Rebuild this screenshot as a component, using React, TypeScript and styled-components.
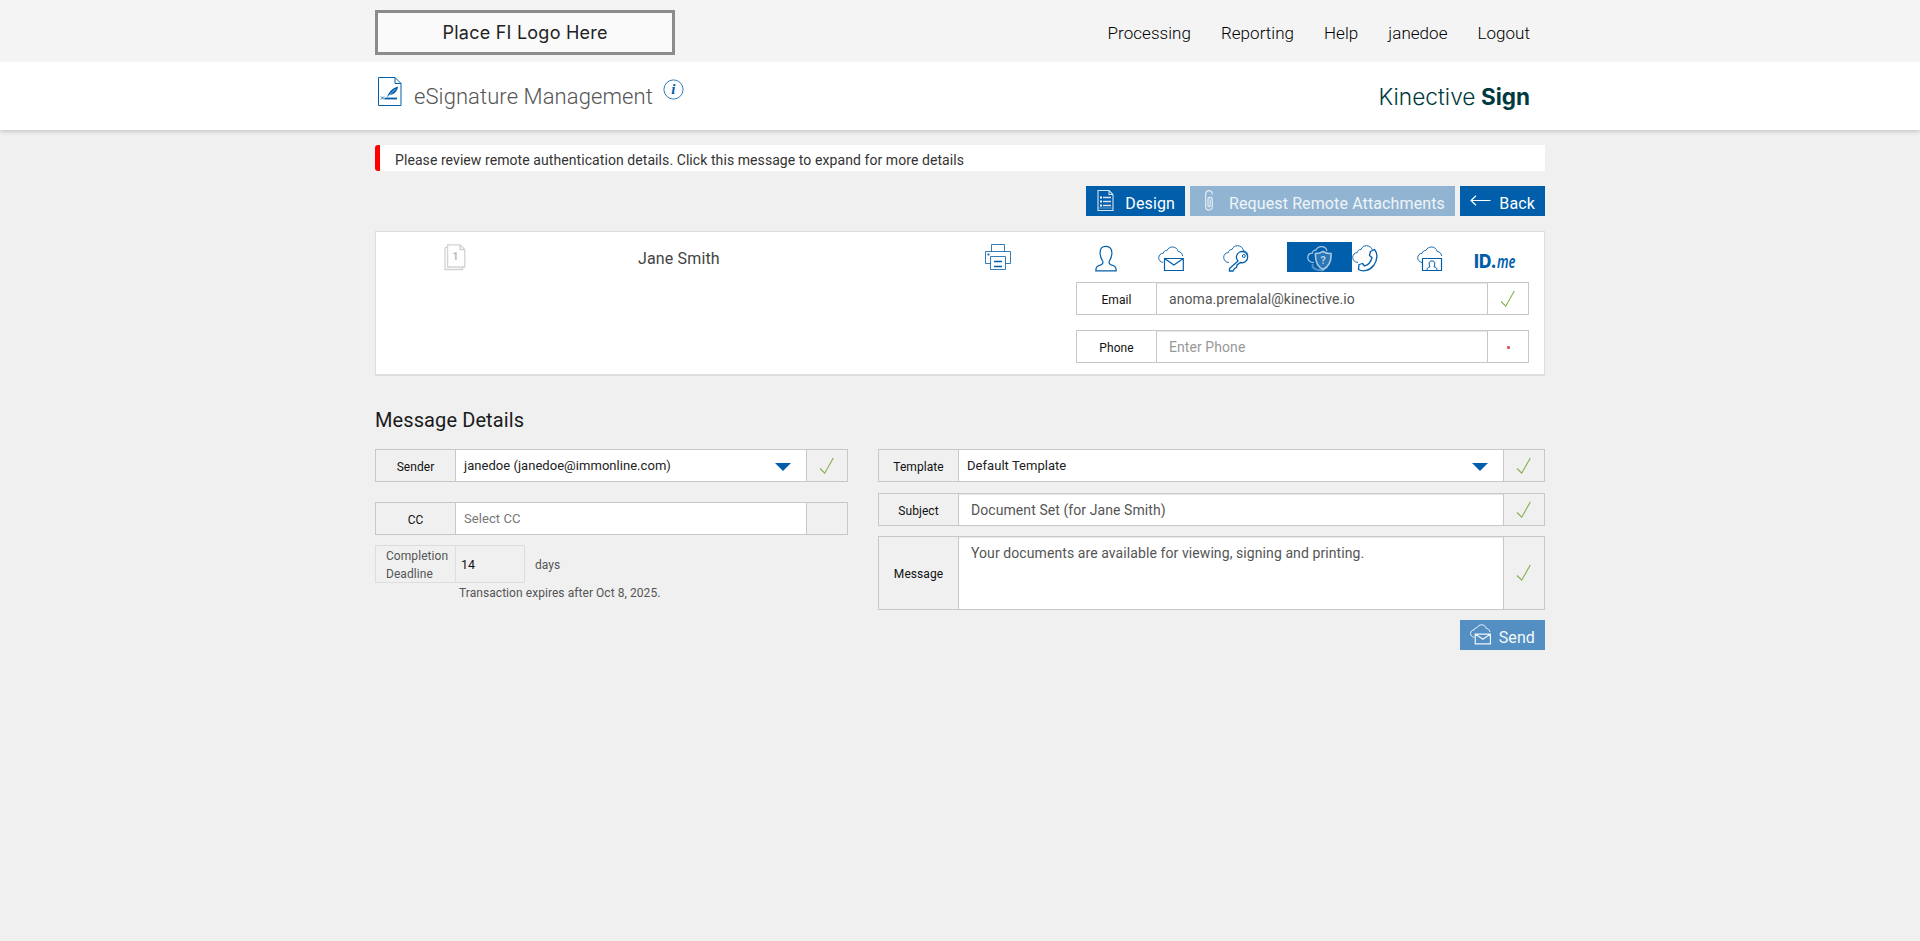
import React from "react";
import styled, { createGlobalStyle } from "styled-components";

const BLUE = "#005eaa";

const Global = createGlobalStyle`
  *, *::before, *::after { box-sizing: border-box; }
  body { margin: 0; background: #f0f0f0; font-family: Roboto, sans-serif; color: #222; min-height: 941px; }
  input, textarea, button { font-family: inherit; }
`;

const TopBar = styled.header`
  position: relative;
  z-index: 1;
  height: 62px;
  background: #f4f4f4;
`;

const SubHeader = styled.div`
  height: 68px;
  background: #fff;
  box-shadow: 0 1px 5px rgba(0, 0, 0, 0.22);
`;

const Container = styled.div`
  width: 1170px;
  height: 100%;
  margin: 0 auto;
  display: flex;
  justify-content: space-between;
`;

const LogoBox = styled.div`
  width: 300px;
  height: 45px;
  margin-top: 10px;
  border: 3px solid #8c8c8c;
  background: #fafafa;
`;

const Nav = styled.nav`
  display: flex;
  gap: 30px;
  padding: 23px 15px 0 0;
`;

const NavLink = styled.a`
  font-size: 17px;
  line-height: 20px;
  font-weight: 300;
  letter-spacing: 0.04px;
  color: #000;
`;

const PageTitle = styled.div`
  display: flex;
  align-items: flex-start;
  padding-left: 3px;
`;

const TitleText = styled.h1`
  margin: 22px 0 0 12px;
  font-size: 22px;
  line-height: 26px;
  font-weight: 300;
  letter-spacing: 0.09px;
  color: #555;
`;

const IconSlot = styled.span<{ $top?: number; $left?: number; $right?: number }>`
  display: block;
  flex: none;
  line-height: 0;
  margin: ${(p) => p.$top ?? 0}px ${(p) => p.$right ?? 0}px 0 ${(p) => p.$left ?? 0}px;
`;

const Main = styled.main`
  width: 1170px;
  margin: 0 auto;
  padding-top: 15px;
`;

const Alert = styled.div`
  height: 26px;
  padding: 6px 0 0 15px;
  border-left: 5px solid #f00;
  border-radius: 3px 0 0 3px;
  background: #fff;
  font-size: 14px;
  line-height: 18px;
  letter-spacing: 0.075px;
  color: #333;
`;

const Actions = styled.div<{ $top: number }>`
  display: flex;
  justify-content: flex-end;
  gap: 5px;
  margin-top: ${(p) => p.$top}px;
`;

const ActionButton = styled.button<{ $width: number; $bg?: string; $color?: string }>`
  width: ${(p) => p.$width}px;
  height: 30px;
  padding: 0 10px;
  border: 0;
  display: flex;
  justify-content: space-between;
  align-items: flex-start;
  background: ${(p) => p.$bg ?? BLUE};
  color: ${(p) => p.$color ?? "#fff"};
  font-size: 16px;
  line-height: 20px;
  letter-spacing: 0.12px;
`;

const ButtonText = styled.span`
  margin-top: 8px;
  white-space: nowrap;
`;

const Panel = styled.section`
  display: flex;
  height: 145px;
  margin-top: 15px;
  background: #fff;
  border: 1px solid #ddd;
  border-bottom-width: 2px;
`;

const DocCell = styled.div`
  width: 262px;
  padding: 12px 0 0 68px;
`;

const SignerName = styled.div`
  width: 347px;
  padding-top: 17px;
  font-size: 16px;
  line-height: 20px;
  letter-spacing: 0.15px;
  color: #444;
`;

const PrintCell = styled.div`
  width: 91px;
  padding-top: 12px;
`;

const AuthArea = styled.div`
  flex: 1;
  padding: 10px 15px 0 0;
`;

const MethodRow = styled.div`
  display: flex;
  height: 30px;
`;

const Method = styled.button<{ $width: number; $pad: number; $active?: boolean; $gap?: number }>`
  width: ${(p) => p.$width}px;
  height: 30px;
  margin: 0 0 0 ${(p) => p.$gap ?? 0}px;
  padding: 3px 0 0 ${(p) => p.$pad}px;
  border: 0;
  text-align: left;
  line-height: 0;
  background: ${(p) => (p.$active ? BLUE : "transparent")};
`;

const Field = styled.div<{ $top?: number; $height?: number }>`
  display: flex;
  height: ${(p) => p.$height ?? 33}px;
  margin-top: ${(p) => p.$top ?? 0}px;
  border: 1px solid #c8c8c8;
`;

const FieldLabel = styled.label<{ $drop?: number }>`
  width: 80px;
  flex: none;
  display: flex;
  align-items: center;
  justify-content: center;
  padding-top: ${(p) => p.$drop ?? 3}px;
  border-right: 1px solid #c8c8c8;
  font-size: 12px;
  line-height: 14px;
  letter-spacing: 0.06px;
  color: #111;
`;

const TextInput = styled.input<{ $hint?: string }>`
  flex: 1;
  min-width: 0;
  padding: 0 12px;
  border: 0;
  outline: 0;
  background: #fff;
  box-shadow: inset 0 1px 1px rgba(0, 0, 0, 0.1);
  font-size: 14px;
  letter-spacing: 0.075px;
  color: #555;
  &::placeholder { color: ${(p) => p.$hint ?? "#999"}; opacity: 1; }
`;

const CcInput = styled(TextInput)`
  padding: 0 8px;
  font-size: 13px;
  box-shadow: none;
`;

const TextArea = styled.textarea`
  flex: 1;
  min-width: 0;
  padding: 6px 12px;
  border: 0;
  outline: 0;
  resize: none;
  background: #fff;
  box-shadow: inset 0 1px 1px rgba(0, 0, 0, 0.1);
  font-size: 14px;
  line-height: 20px;
  letter-spacing: 0.085px;
  color: #555;
`;

const SelectBox = styled.div`
  flex: 1;
  display: flex;
  align-items: center;
  justify-content: space-between;
  padding: 0 15px 0 8px;
  background: #fff;
  font-size: 13px;
  letter-spacing: 0.04px;
  color: #222;
`;

const Caret = styled.span`
  border: 8px solid transparent;
  border-top-color: ${BLUE};
  border-bottom: 0;
  margin-top: 3px;
`;

const Status = styled.div`
  width: 41px;
  flex: none;
  display: flex;
  align-items: center;
  justify-content: center;
  border-left: 1px solid #c8c8c8;
`;

const Dot = styled.span`
  width: 3px;
  height: 3px;
  margin-top: 1px;
  border-radius: 1px;
  background: #dc5560;
`;

const SectionTitle = styled.h2`
  margin: 32px 0 0;
  font-size: 20px;
  line-height: 24px;
  font-weight: 400;
  letter-spacing: 0.1px;
  color: #1a1a1a;
`;

const Columns = styled.div`
  display: flex;
  gap: 30px;
  margin-top: 17px;
`;

const LeftColumn = styled.div`
  width: 473px;
`;

const RightColumn = styled.div`
  flex: 1;
`;

const DeadlineRow = styled.div`
  display: flex;
  height: 38px;
  margin-top: 10px;
  font-size: 12px;
  letter-spacing: 0.06px;
  color: #555;
`;

const DeadlineBox = styled.div`
  display: flex;
  width: 150px;
  height: 38px;
  margin-right: 10px;
  border: 1px solid #ddd;
`;

const DeadlineLabel = styled.div`
  width: 80px;
  padding: 1px 0 0 10px;
  border-right: 1px solid #ddd;
  line-height: 18px;
`;

const DeadlineValue = styled.div`
  padding: 1px 0 0 5px;
  align-self: center;
  font-size: 12.5px;
  color: #111;
`;

const DeadlineUnit = styled.span`
  padding-top: 2px;
  align-self: center;
`;

const Expires = styled.div`
  margin: 2px 0 0 84px;
  font-size: 12px;
  line-height: 16px;
  letter-spacing: 0.06px;
  color: #555;
`;

const LogoSvg = styled.svg`
  display: block;
  overflow: visible;
`;

const CLOUD = "M6 17.5C2.8 17.5.7 15 .7 12.300.7 9.700 2.700 7.600 5.300 7.600 5.600 5.500 7.200 4.300 9 4.500 10 2 11.900.7 14.400.7 17.700.7 20.200 3 20.600 5.900 23.300 6.200 24.600 7.800 24.900 10";

const Check = () => (
  <svg width="16" height="18" viewBox="0 0 16 18" fill="none">
    <path d="M1 11.500 5.700 16.200 14.300 1" stroke="#83b04c" strokeWidth="1.100" />
  </svg>
);

const EsignIcon = () => (
  <svg width="24" height="30" viewBox="0 0 24 30" fill="none" stroke={BLUE}>
    <path d="M.5.5H17L23 6.500V28.500H.5ZM17 .5V6.500H23" />
    <path d="M6.500 21.500H19" strokeWidth="1.800" />
    <path d="M3 19.500 6 22.500M6 19.500 3 22.500" strokeWidth=".9" />
    <path d="M9 20.500C10.500 15 14.500 11 20 9.500 19.500 14 16 18 11.500 18Z" fill={BLUE} stroke="none" />
    <path d="M10 19.500 17.500 12" stroke="#fff" strokeWidth=".6" />
  </svg>
);

const InfoIcon = () => (
  <svg width="21" height="21" viewBox="0 0 21 21">
    <circle cx="10.500" cy="10.500" r="9.600" fill="none" stroke={BLUE} strokeWidth=".8" />
    <text x="10.300" y="15.300" textAnchor="middle" fontFamily="Liberation Serif, serif" fontStyle="italic" fontWeight="700" fontSize="15" fill={BLUE}>i</text>
  </svg>
);

const Brand = () => (
  <LogoSvg width="152" height="30" viewBox="0 0 152 30" fill="#003a40">
    <text x="-.5" y="22" fontFamily="Inter, sans-serif" fontSize="22.500" fontWeight="300" textLength="97" lengthAdjust="spacingAndGlyphs">Kinective</text>
    <text x="102" y="22" fontFamily="Inter, sans-serif" fontSize="22.500" fontWeight="700" textLength="49" lengthAdjust="spacingAndGlyphs">Sign</text>
  </LogoSvg>
);

const FormIcon = () => (
  <svg width="18" height="21" viewBox="0 0 18 21" fill="none" stroke="#d5e4f1">
    <path d="M1 .5H12L16 4.500V20.500H1ZM12 .5V4.500H16" strokeWidth="1.100" />
    <path d="M3 7.500H5M3 11.500H5M3 15.500H5" strokeWidth="2" stroke="#fff" />
    <path d="M6 7.500H14M6 11.500H14M6 15.500H14" strokeWidth="1.300" />
    <path d="M1 18H16" strokeWidth=".8" opacity=".6" />
  </svg>
);

const ClipIcon = () => (
  <svg width="8" height="21" viewBox="0 0 8 21" fill="none" stroke="#e8f0f7" strokeWidth="1.150">
    <path d="M7.300 4.500V4C7.300-.5.700-.5.700 4V16.500C.7 21.300 7.300 21.300 7.300 16.500V10C7.300 6.400 3 6.400 3 10V15.500C3 17.200 5.200 17.200 5.200 15.500V9.500" />
  </svg>
);

const ArrowIcon = () => (
  <svg width="21" height="11" viewBox="0 0 21 11" fill="none" stroke="#fff" strokeWidth="1.200">
    <path d="M1 5.500H20.500M6 .8 1 5.500 6 10.200" />
  </svg>
);

const DocsIcon = () => (
  <svg width="22" height="27" viewBox="0 0 22 27" fill="none" stroke="#d2d2d2">
    <path d="M1 3.500V25.500H18.500V23.500M1 3.500H3.500" strokeWidth="1.300" />
    <path d="M3.600.8H16L20.800 5.500V23H3.600ZM16 .8V5.500H20.800" strokeWidth="1.300" />
    <text x="11.500" y="16" textAnchor="middle" fontFamily="Roboto, sans-serif" fontWeight="700" fontSize="11" fill="#bbb" stroke="none">1</text>
  </svg>
);

const PrinterIcon = () => (
  <svg width="26" height="27" viewBox="0 0 26 27" fill="none" stroke={BLUE} strokeWidth=".8">
    <path d="M6.500 7.500V.5H19.500V7.500M5.500 19.500H.5V7.500H25.500V19.500H20.500" />
    <path d="M5.500 12.500H20.500V25.500H5.500Z" />
    <path d="M9 17.500H17M9 22.500H17" strokeWidth="1.300" />
    <path d="M2.500 10.500H4.500" strokeWidth="1.700" />
  </svg>
);

const PersonIcon = () => (
  <svg width="22" height="27" viewBox="0 0 22 27" fill="none" stroke={BLUE} strokeWidth="1.200">
    <path d="M7.800 16.500C6.600 14.500 5.100 12 5.100 8.200 5.100 3.400 6.800 1.300 11 1.300S16.900 3.400 16.900 8.200C16.900 12 15.400 14.500 14.200 16.500 13.600 18.300 14.400 19.300 16.200 19.900 19.500 20.900 21.200 21.500 21.200 25.800H.8C.8 21.500 2.500 20.900 5.800 19.900 7.600 19.300 8.400 18.300 7.800 16.500Z" />
  </svg>
);

const CloudMailIcon = ({ color = BLUE, size = 26 }: { color?: string; size?: number }) => (
  <svg width={size} height={size} viewBox="0 0 26 26" fill="none" stroke={color}>
    <path d="M5 16.500C2.500 16 .7 14.200.7 11.800.7 9.200 2.700 7.300 5.200 7.300 5.600 5.300 7 4.500 8.800 4.600 10 2.200 12 1 14.500 1 17.500 1 19.600 2.900 20.100 5.500 22.700 5.700 24.400 7.500 24.700 10" strokeWidth={size < 26 ? 1.2 : 0.9} />
    <path d="M6.500 12.500H25.300V24.500H6.500ZM6.500 12.500 15.900 19 25.300 12.500" strokeWidth={size < 26 ? 1.5 : 1.2} />
  </svg>
);

const CloudKeyIcon = () => (
  <svg width="27" height="27" viewBox="0 0 27 27" fill="none" stroke={BLUE}>
    <path d={CLOUD} strokeWidth=".9" />
    <path d="M15 16 6.500 23.500V26H10L11.500 23.500 13.500 22.500 14 20 17.500 17.500A5.600 5.600 0 1 0 15 16Z" strokeWidth="1.300" fill="#fff" />
    <circle cx="20.800" cy="11" r="1.500" strokeWidth="1" />
  </svg>
);

const CloudShieldIcon = () => (
  <svg width="26" height="26" viewBox="0 0 26 26" fill="none" stroke="#a9c8e2">
    <path d="M7 16.500C3 16.500.8 14.500.8 11.600.8 9 2.700 7.200 5.300 7.200 5.500 5.200 7 4 8.900 4.200 10 1.900 12 .7 14.300.7 17.500.7 19.500 2.500 20 5" strokeWidth="1.200" />
    <path d="M6 18C3.500 22 10 25 17 24" opacity=".5" strokeWidth="2" />
    <path d="M8.500 7.500C11.500 7.800 13.500 7 16 5.500 18.500 7 20.800 7.800 24 7.500 24.500 15 22 20.500 16.200 23.500 10.300 20.500 8 15 8.500 7.500Z" strokeWidth="1.600" fill="#2b76b7" />
    <text x="16.200" y="18" textAnchor="middle" fontFamily="Roboto, sans-serif" fontWeight="700" fontSize="10.500" fill="#b5cfe6" stroke="none">?</text>
  </svg>
);

const CloudPhoneIcon = () => (
  <svg width="27" height="27" viewBox="0 0 27 27" fill="none" stroke={BLUE}>
    <path d={CLOUD} strokeWidth=".9" />
    <path d="M18.500 6.500 22.500 4.500C26 8.500 25.500 15 22 20 17.500 26 11 27 6.500 24.500L7 19.500 10.500 18.500 12.500 21C16 20 19 16.500 20 12.500L17.500 10.500Z" strokeWidth="1.300" fill="#fff" strokeLinejoin="round" />
  </svg>
);

const CloudIdIcon = () => (
  <svg width="27" height="26" viewBox="0 0 27 26" fill="none" stroke={BLUE}>
    <path d="M5 16.500C2.500 16 .7 14.200.7 11.800.7 9.200 2.700 7.300 5.200 7.300 5.600 5.300 7 4.500 8.800 4.600 10 2.200 12 1 14.500 1 17.500 1 19.600 2.900 20.100 5.500 22.700 5.700 24.400 7.500 24.700 10" strokeWidth=".9" />
    <path d="M5.500 12.500H24.500V24.500H5.500Z" strokeWidth="1.200" />
    <path d="M10 24C10 21.500 11.500 21.200 13 20.800 12.300 19.500 12 18.500 12.100 17 12.300 14.200 17.600 14.200 17.800 17 17.900 18.500 17.600 19.500 16.900 20.800 18.600 21.200 20 21.500 20 24" />
  </svg>
);

const IdMeLogo = () => (
  <LogoSvg width="42" height="20" viewBox="0 0 42 20" fill={BLUE}>
    <text x="-1" y="15" fontFamily="Inter, sans-serif" fontWeight="800" fontSize="19" textLength="22.500" lengthAdjust="spacingAndGlyphs">ID.</text>
    <text x="22" y="15" fontFamily="Noto Sans, sans-serif" fontStyle="italic" fontWeight="600" fontSize="17" textLength="18.500" lengthAdjust="spacingAndGlyphs">me</text>
  </LogoSvg>
);

const FiLogo = () => (
  <LogoSvg width="294" height="39" viewBox="0 0 294 39">
    <text x="64.500" y="25.500" fontFamily="Inter, sans-serif" fontSize="18" fill="#222" textLength="165">Place FI Logo Here</text>
  </LogoSvg>
);

const LINKS = ["Processing", "Reporting", "Help", "janedoe", "Logout"];

export default function App() {
  return (
    <>
      <Global />
      <TopBar>
        <Container>
          <LogoBox><FiLogo /></LogoBox>
          <Nav>{LINKS.map((l) => <NavLink key={l}>{l}</NavLink>)}</Nav>
        </Container>
      </TopBar>
      <SubHeader>
        <Container>
          <PageTitle>
            <IconSlot $top={15}><EsignIcon /></IconSlot>
            <TitleText>eSignature Management</TitleText>
            <IconSlot $top={17} $left={10}><InfoIcon /></IconSlot>
          </PageTitle>
          <IconSlot $top={21} $right={14}><Brand /></IconSlot>
        </Container>
      </SubHeader>
      <Main>
        <Alert>Please review remote authentication details. Click this message to expand for more details</Alert>
        <Actions $top={15}>
          <ActionButton $width={99}>
            <IconSlot $top={4} $left={1}><FormIcon /></IconSlot>
            <ButtonText>Design</ButtonText>
          </ActionButton>
          <ActionButton $width={265} $bg="#91b4d2" $color="#eff4f8">
            <IconSlot $top={4} $left={5}><ClipIcon /></IconSlot>
            <ButtonText>Request Remote Attachments</ButtonText>
          </ActionButton>
          <ActionButton $width={85}>
            <IconSlot $top={9}><ArrowIcon /></IconSlot>
            <ButtonText>Back</ButtonText>
          </ActionButton>
        </Actions>
        <Panel>
          <DocCell><DocsIcon /></DocCell>
          <SignerName>Jane Smith</SignerName>
          <PrintCell><PrinterIcon /></PrintCell>
          <AuthArea>
            <MethodRow>
              <Method $width={63} $pad={19}><PersonIcon /></Method>
              <Method $width={65} $pad={19}><CloudMailIcon /></Method>
              <Method $width={65} $pad={19}><CloudKeyIcon /></Method>
              <Method $width={65} $pad={20} $gap={18} $active><CloudShieldIcon /></Method>
              <Method $width={65} $pad={0}><CloudPhoneIcon /></Method>
              <Method $width={58} $pad={0}><CloudIdIcon /></Method>
              <Method $width={42} $pad={0}><IconSlot $top={8}><IdMeLogo /></IconSlot></Method>
            </MethodRow>
            <Field $top={10}>
              <FieldLabel>Email</FieldLabel>
              <TextInput defaultValue="anoma.premalal@kinective.io" />
              <Status><Check /></Status>
            </Field>
            <Field $top={15}>
              <FieldLabel>Phone</FieldLabel>
              <TextInput placeholder="Enter Phone" />
              <Status><Dot /></Status>
            </Field>
          </AuthArea>
        </Panel>
        <SectionTitle>Message Details</SectionTitle>
        <Columns>
          <LeftColumn>
            <Field>
              <FieldLabel>Sender</FieldLabel>
              <SelectBox>janedoe (janedoe@immonline.com)<Caret /></SelectBox>
              <Status><Check /></Status>
            </Field>
            <Field $top={20}>
              <FieldLabel>CC</FieldLabel>
              <CcInput placeholder="Select CC" $hint="#777" />
              <Status />
            </Field>
            <DeadlineRow>
              <DeadlineBox>
                <DeadlineLabel>Completion Deadline</DeadlineLabel>
                <DeadlineValue>14</DeadlineValue>
              </DeadlineBox>
              <DeadlineUnit>days</DeadlineUnit>
            </DeadlineRow>
            <Expires>Transaction expires after Oct 8, 2025.</Expires>
          </LeftColumn>
          <RightColumn>
            <Field>
              <FieldLabel>Template</FieldLabel>
              <SelectBox>Default Template<Caret /></SelectBox>
              <Status><Check /></Status>
            </Field>
            <Field $top={11}>
              <FieldLabel>Subject</FieldLabel>
              <TextInput defaultValue="Document Set (for Jane Smith)" />
              <Status><Check /></Status>
            </Field>
            <Field $top={10} $height={74}>
              <FieldLabel $drop={1}>Message</FieldLabel>
              <TextArea defaultValue="Your documents are available for viewing, signing and printing." />
              <Status><Check /></Status>
            </Field>
            <Actions $top={10}>
              <ActionButton $width={85} $bg="#538fc2" $color="#f5f9fc">
                <IconSlot $top={4}><CloudMailIcon color="#f0f6fb" size={21} /></IconSlot>
                <ButtonText>Send</ButtonText>
              </ActionButton>
            </Actions>
          </RightColumn>
        </Columns>
      </Main>
    </>
  );
}
